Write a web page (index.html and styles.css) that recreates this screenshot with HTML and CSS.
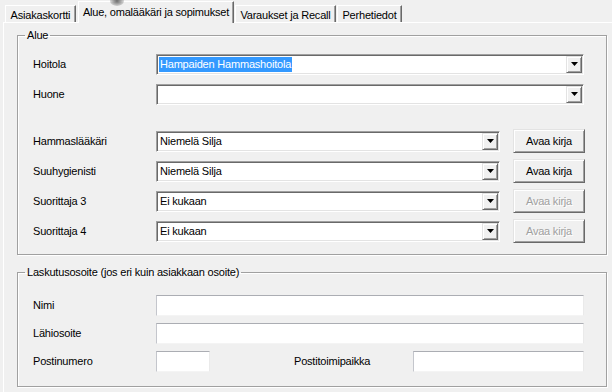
FILE: index.html
```html
<!DOCTYPE html>
<html lang="fi">
<head>
<meta charset="utf-8">
<title>Alue, omalääkäri ja sopimukset</title>
<link rel="stylesheet" href="styles.css">
</head>
<body>
<div class="cursor"></div>
<div class="tabs">
  <div class="tab t1">Asiakaskortti</div>
  <div class="tab active">Alue, omalääkäri ja sopimukset</div>
  <div class="tab t3">Varaukset ja Recall</div>
  <div class="tab t4">Perhetiedot</div>
</div>
<div class="panel">
  <fieldset class="group g1">
    <legend>Alue</legend>
    <div class="row">
      <span class="lbl">Hoitola</span>
      <div class="combo wide"><span class="val"><span class="sel">Hampaiden Hammashoitola</span></span><span class="drop"><svg width="7" height="4" viewBox="0 0 7 4"><polygon points="0,0 7,0 3.5,4" fill="#000"/></svg></span></div>
    </div>
    <div class="row">
      <span class="lbl">Huone</span>
      <div class="combo wide"><span class="val"></span><span class="drop"><svg width="7" height="4" viewBox="0 0 7 4"><polygon points="0,0 7,0 3.5,4" fill="#000"/></svg></span></div>
    </div>
    <div class="row spaced">
      <span class="lbl">Hammaslääkäri</span>
      <div class="combo narrow"><span class="val">Niemelä Silja</span><span class="drop"><svg width="7" height="4" viewBox="0 0 7 4"><polygon points="0,0 7,0 3.5,4" fill="#000"/></svg></span></div>
      <div class="btn">Avaa kirja</div>
    </div>
    <div class="row">
      <span class="lbl">Suuhygienisti</span>
      <div class="combo narrow"><span class="val">Niemelä Silja</span><span class="drop"><svg width="7" height="4" viewBox="0 0 7 4"><polygon points="0,0 7,0 3.5,4" fill="#000"/></svg></span></div>
      <div class="btn">Avaa kirja</div>
    </div>
    <div class="row">
      <span class="lbl">Suorittaja 3</span>
      <div class="combo narrow"><span class="val">Ei kukaan</span><span class="drop"><svg width="7" height="4" viewBox="0 0 7 4"><polygon points="0,0 7,0 3.5,4" fill="#000"/></svg></span></div>
      <div class="btn disabled">Avaa kirja</div>
    </div>
    <div class="row">
      <span class="lbl">Suorittaja 4</span>
      <div class="combo narrow"><span class="val">Ei kukaan</span><span class="drop"><svg width="7" height="4" viewBox="0 0 7 4"><polygon points="0,0 7,0 3.5,4" fill="#000"/></svg></span></div>
      <div class="btn disabled">Avaa kirja</div>
    </div>
  </fieldset>
  <fieldset class="group g2">
    <legend>Laskutusosoite (jos eri kuin asiakkaan osoite)</legend>
    <div class="row2">
      <span class="lbl">Nimi</span>
      <div class="input full"></div>
    </div>
    <div class="row2">
      <span class="lbl">Lähiosoite</span>
      <div class="input full"></div>
    </div>
    <div class="row2">
      <span class="lbl">Postinumero</span>
      <div class="input zip"></div>
      <span class="lbl2">Postitoimipaikka</span>
      <div class="input city"></div>
    </div>
  </fieldset>
</div>
</body>
</html>
```
FILE: styles.css
```css
html, body {
  margin: 0;
  padding: 0;
}
body {
  background: #f0f0f0;
  font-family: "Liberation Sans", Arial, sans-serif;
  font-size: 11px;
  letter-spacing: -0.2px;
  color: #000;
  width: 612px;
  height: 392px;
  overflow: hidden;
  position: relative;
}

.cursor {
  position: absolute;
  left: 110px;
  top: -4px;
  width: 14px;
  height: 10px;
  border-radius: 50%;
  background: radial-gradient(ellipse at center, rgba(60,60,60,0.75) 0%, rgba(90,90,90,0.35) 55%, rgba(240,240,240,0) 100%);
  z-index: 5;
}

/* Tabs */
.tabs {
  display: flex;
  align-items: flex-end;
  height: 22px;
  padding-left: 5px;
  position: relative;
  z-index: 2;
}
.tab {
  box-sizing: border-box;
  height: 17px;
  border-top: 1px solid #fff;
  border-left: 1px solid #fff;
  border-right: 1px solid #696969;
  box-shadow: inset -1px 0 0 #a0a0a0;
  display: flex;
  align-items: center;
  justify-content: center;
  white-space: nowrap;
  padding-top: 1px;
}
.t1 { width: 71px; margin-right: 2px; }
.t3 { width: 101px; margin-right: 1px; }
.t4 { width: 65px; }
.tab.active {
  width: 156px;
  height: 22px;
  margin-right: 1px;
  margin-bottom: -1px;
  background: #f0f0f0;
  padding-top: 0;
  padding-bottom: 2px;
}

/* Panel */
.panel {
  margin-left: 3px;
  border-top: 1px solid #fff;
  border-left: 1px solid #fff;
  height: 369px;
  padding-left: 13px;
}

.group {
  box-sizing: border-box;
  width: 590px;
  margin: 6px 0 0 0;
  border: 1px solid #a0a0a0;
  box-shadow: 1px 1px 0 #fff, inset 1px 1px 0 #fff;
  padding: 7px 0 8px 15px;
  min-width: 0;
}
.group legend {
  font-size: 11px;
  line-height: 13px;
  padding: 0 2px;
  margin-left: -8px;
}
.g2 {
  margin-top: 11px;
  padding: 12px 0 11px 15px;
}

.row {
  display: flex;
  align-items: center;
  height: 30px;
}
.row.spaced {
  margin-top: 17px;
}
.row2 {
  display: flex;
  align-items: center;
  height: 28px;
}
.lbl {
  width: 123px;
  flex: none;
}

/* Combo box (classic sunken) */
.combo {
  box-sizing: border-box;
  height: 21px;
  background: #fff;
  border-top: 1px solid #a0a0a0;
  border-left: 1px solid #a0a0a0;
  border-right: 1px solid #fff;
  border-bottom: 1px solid #fff;
  box-shadow: inset 1px 1px 0 #696969, inset -1px -1px 0 #e3e3e3;
  display: flex;
  align-items: center;
  padding: 1px;
  flex: none;
}
.combo.wide { width: 428px; }
.combo.narrow { width: 344px; }
.combo .val {
  flex: 1;
  padding-left: 2px;
  white-space: nowrap;
  overflow: hidden;
  line-height: 15px;
}
.combo .sel {
  background: #3399ff;
  color: #fff;
  display: inline-block;
  padding: 0 1px;
  margin-left: -1px;
  line-height: 15px;
}
.drop {
  box-sizing: border-box;
  width: 16px;
  height: 17px;
  background: #f0f0f0;
  border: 1px solid;
  border-color: #e3e3e3 #696969 #696969 #e3e3e3;
  box-shadow: inset 1px 1px 0 #fff, inset -1px -1px 0 #a0a0a0;
  display: flex;
  align-items: center;
  justify-content: center;
  flex: none;
}
.drop svg { display: block; }

/* Buttons */
.btn {
  box-sizing: border-box;
  width: 72px;
  height: 24px;
  margin-left: 13px;
  background: #f0f0f0;
  border: 1px solid;
  border-color: #e3e3e3 #696969 #696969 #e3e3e3;
  box-shadow: inset 1px 1px 0 #fff, inset -1px -1px 0 #a0a0a0;
  display: flex;
  align-items: center;
  justify-content: center;
  flex: none;
}
.btn.disabled {
  color: #a0a0a0;
  text-shadow: 1px 1px 0 #fff;
}

/* Text inputs */
.input {
  box-sizing: border-box;
  height: 21px;
  background: #fff;
  border-top: 1px solid #abadb3;
  border-left: 1px solid #c4c6cc;
  border-right: 1px solid #eaeaea;
  border-bottom: 1px solid #f4f4f4;
  flex: none;
}
.input.full { width: 428px; }
.input.zip { width: 54px; }
.lbl2 {
  margin-left: 84px;
  width: 119px;
  flex: none;
}
.input.city { width: 171px; }
```
